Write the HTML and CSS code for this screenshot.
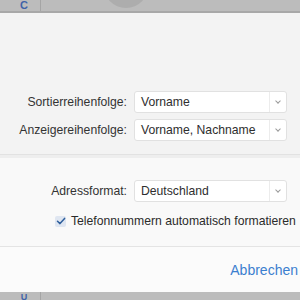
FILE: index.html
```html
<!DOCTYPE html>
<html lang="de">
<head>
    <meta charset="UTF-8">
    <title>Kontakte Einstellungen</title>
    <link rel="stylesheet" href="styles.css">
</head>
<body>

<div class="topbar">
    <span class="index-letter">C</span>
    <span class="sep"></span>
    <span class="avatar"></span>
</div>

<div class="sheet">
    <div class="section first">
        <div class="form-grid">
            <label>Sortierreihenfolge:</label>
            <div class="select"><span class="value">Vorname</span><span class="chevron"></span></div>

            <label>Anzeigereihenfolge:</label>
            <div class="select"><span class="value">Vorname, Nachname</span><span class="chevron"></span></div>
        </div>
    </div>

    <div class="section second">
        <div class="form-grid">
            <label>Adressformat:</label>
            <div class="select"><span class="value">Deutschland</span><span class="chevron"></span></div>
        </div>
        <div class="check-row">
            <span class="checkbox">
                <svg width="10" height="10" viewBox="0 0 10 10"><path d="M1.5 5.2 L4 7.6 L8.6 2.4" fill="none" stroke="#2f5f9c" stroke-width="1.5" stroke-linecap="round" stroke-linejoin="round"/></svg>
            </span>
            <span>Telefonnummern automatisch formatieren</span>
        </div>
    </div>

    <div class="footer">
        <button class="link-button">Abbrechen</button>
    </div>
</div>

<div class="bottombar">
    <span class="index-letter">U</span>
    <span class="sep"></span>
</div>

</body>
</html>
```

FILE: styles.css
```css
body {
    margin: 0;
    width: 300px;
    height: 300px;
    overflow: hidden;
    font-family: "Liberation Sans", Arial, sans-serif;
    font-size: 12.2px;
    color: #2b2b2b;
    background-color: #f4f4f4;
}

.topbar, .bottombar {
    position: relative;
    display: flex;
    align-items: flex-end;
    background-color: #bcbcbc;
    overflow: hidden;
}

.topbar {
    height: 11px;
    border-bottom: 2px solid #a8a8a8;
}

.bottombar {
    height: 8px;
    align-items: flex-start;
}

.index-letter {
    width: 24px;
    margin-left: 12px;
    text-align: center;
    color: #3f63a8;
    font-size: 11px;
    font-weight: bold;
    line-height: 11px;
}

.bottombar .index-letter {
    padding-top: 1px;
    font-size: 9px;
    line-height: 8px;
}

.sep {
    width: 1px;
    height: 100%;
    margin-left: 4px;
    background-color: #a5a5a5;
}

.avatar {
    position: absolute;
    left: 103px;
    top: -40px;
    width: 46px;
    height: 48px;
    border-radius: 50%;
    background-color: #adadad;
}

.sheet {
    height: 279px;
    display: flex;
    flex-direction: column;
}

.section {
    display: flex;
    flex-direction: column;
}

.section.first {
    height: 142px;
    padding-top: 78px;
    box-sizing: border-box;
    background-color: #f3f3f3;
    border-bottom: 1px solid #e2e2e2;
}

.section.second {
    height: 92px;
    padding-top: 22px;
    box-sizing: border-box;
    background-color: #f9f9f9;
    border-bottom: 1px solid #e4e4e4;
    border-top: 3px solid #eeeeee;
}

.form-grid {
    display: grid;
    grid-template-columns: 127px 153px;
    column-gap: 7px;
    row-gap: 6px;
    align-items: center;
}

.form-grid label {
    text-align: right;
    color: #333;
}

.select {
    display: flex;
    align-items: center;
    height: 22px;
    box-sizing: border-box;
    background-color: #fff;
    border: 1px solid #e1e1e1;
    border-radius: 3px;
}

.select .value {
    flex: 1;
    padding-left: 6px;
    color: #2e2e2e;
}

.chevron {
    width: 16px;
    height: 20px;
    border-left: 1px solid #ececec;
    position: relative;
}

.chevron::after {
    content: "";
    position: absolute;
    left: 6px;
    top: 7px;
    width: 3px;
    height: 3px;
    border-right: 1px solid #9a9a9a;
    border-bottom: 1px solid #9a9a9a;
    transform: rotate(45deg);
}

.check-row {
    display: flex;
    align-items: center;
    gap: 5px;
    margin-top: 12px;
    margin-left: 55px;
    white-space: nowrap;
}

.checkbox {
    display: flex;
    align-items: center;
    justify-content: center;
    width: 11px;
    height: 11px;
    border-radius: 2px;
    background-color: #dfe6f1;
}

.footer {
    flex: 1;
    display: flex;
    justify-content: flex-end;
    align-items: center;
    background-color: #fbfbfb;
}

.link-button {
    background: none;
    border: none;
    padding: 0;
    margin-right: 2px;
    font-family: inherit;
    font-size: 14px;
    color: #3b7fcf;
}
```
